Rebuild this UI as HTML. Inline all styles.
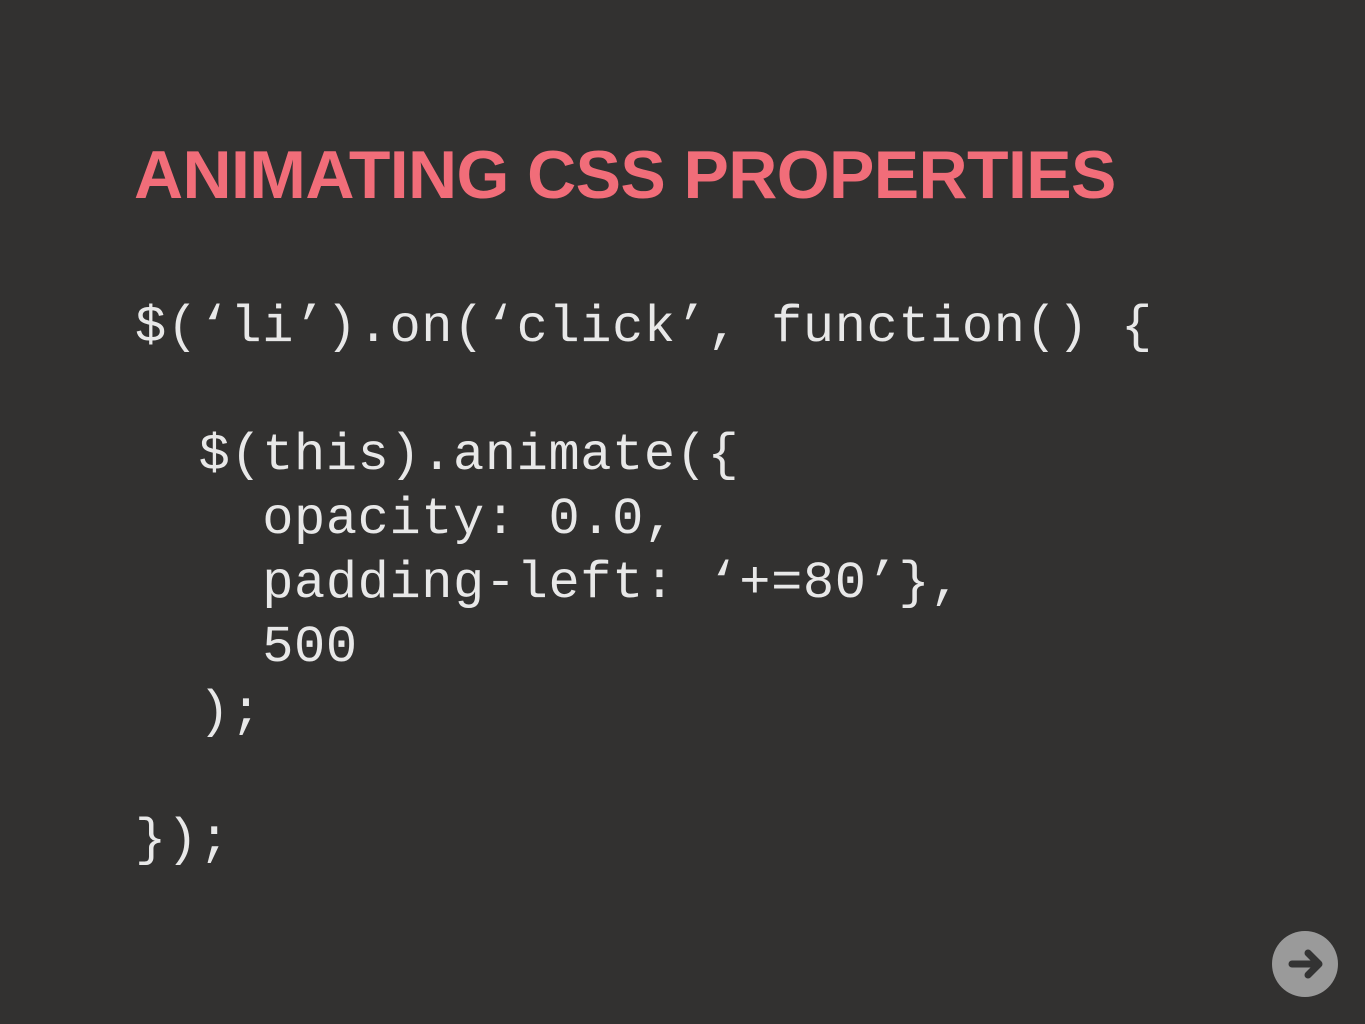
<!DOCTYPE html>
<html><head><style>
html,body{margin:0;padding:0;}
body{width:1365px;height:1024px;background:#323130;position:relative;overflow:hidden;}
h1{position:absolute;left:134px;top:141px;margin:0;font:bold 68px/1 "Liberation Sans",sans-serif;color:#f16d79;letter-spacing:-0.6px;white-space:nowrap;}
.c{position:absolute;left:135px;font:52px/64px "Liberation Mono",monospace;letter-spacing:0.6px;color:#e8e8e8;white-space:pre;margin:0;}
</style></head><body>
<h1>ANIMATING CSS PROPERTIES</h1>
<div class="c" style="top:296px">$(‘li’).on(‘click’, function() {</div>
<div class="c" style="top:424px">  $(this).animate({</div>
<div class="c" style="top:488px">    opacity: 0.0,</div>
<div class="c" style="top:552px">    padding-left: ‘+=80’},</div>
<div class="c" style="top:616px">    500</div>
<div class="c" style="top:681px">  );</div>
<div class="c" style="top:809px">});</div>
<svg style="position:absolute;left:1271px;top:930px" width="68" height="68" viewBox="0 0 68 68">
<circle cx="34" cy="34" r="33" fill="#9a9a9a"/>
<path d="M21 34H48M37 23L48 34L37 45" stroke="#333" stroke-width="7" fill="none" stroke-linecap="round" stroke-linejoin="round"/>
</svg>
</body></html>
